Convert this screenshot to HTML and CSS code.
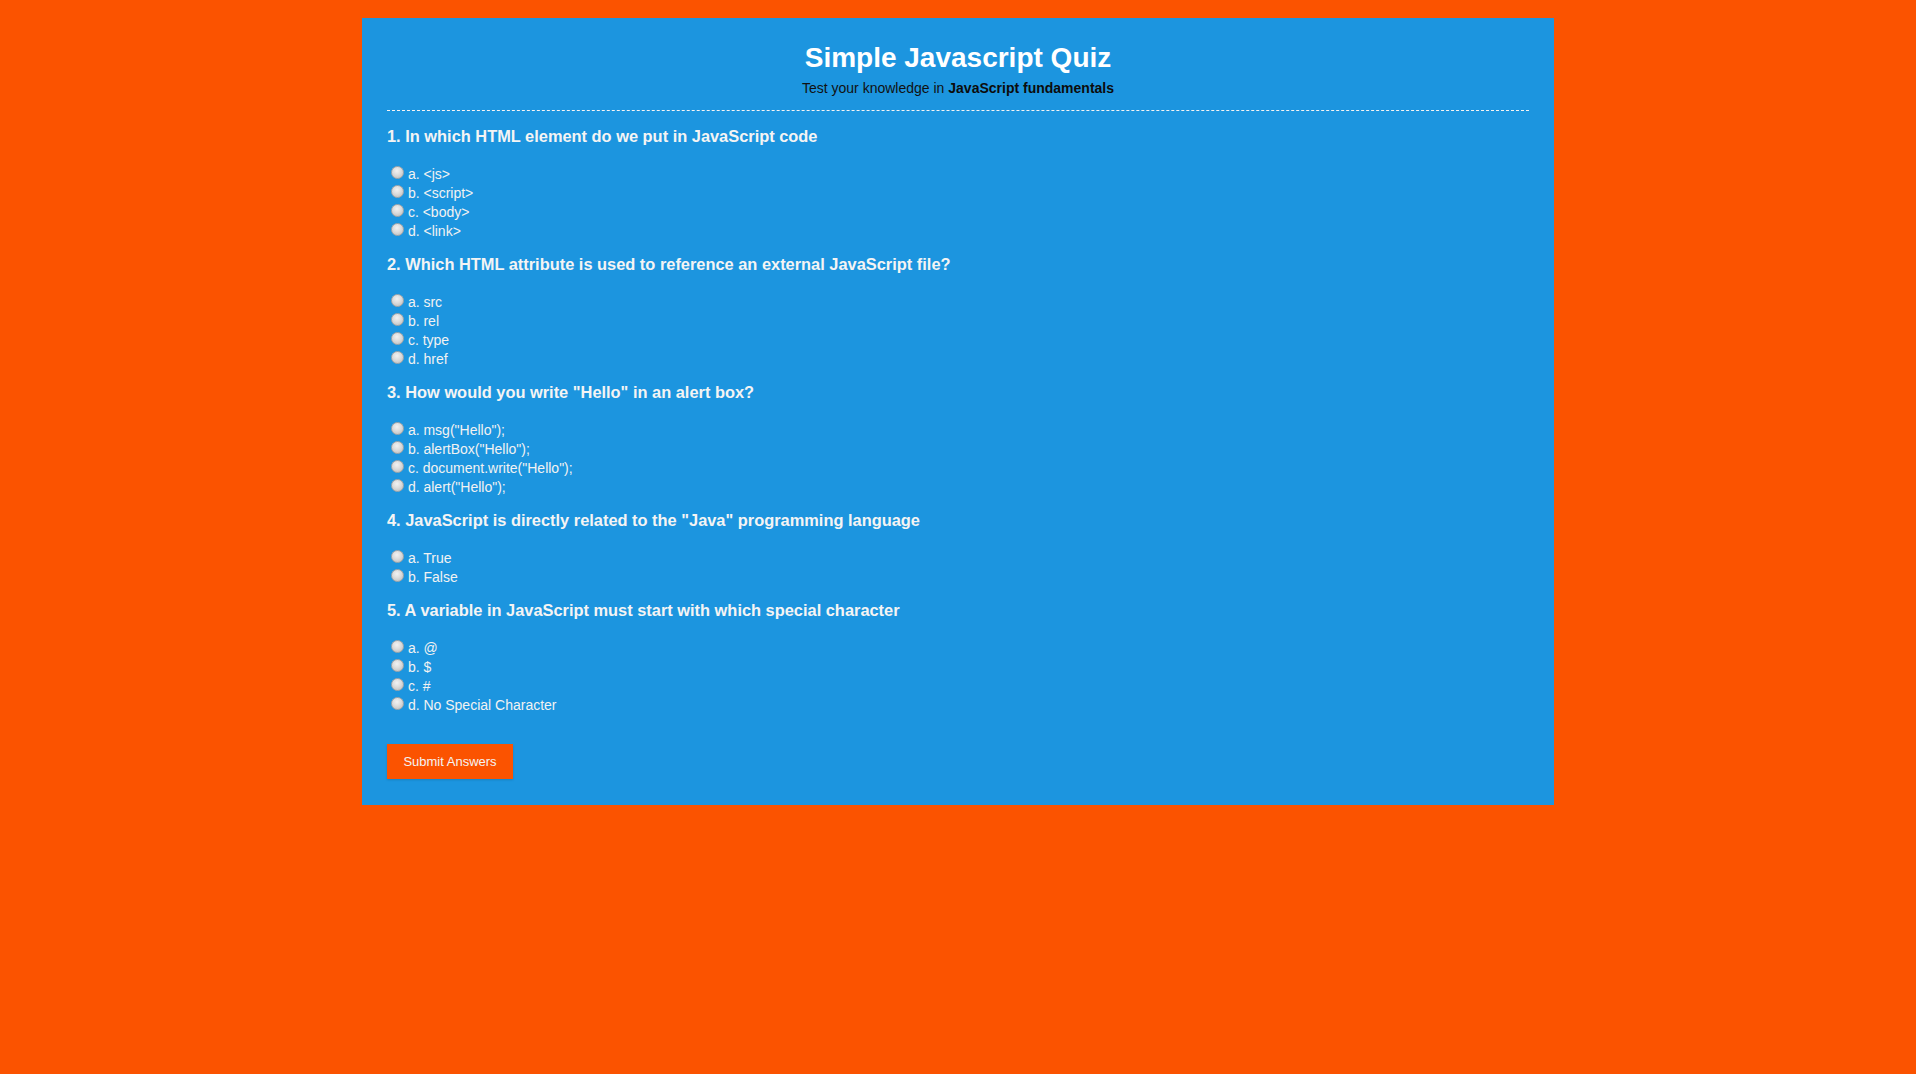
FILE: index.html
```html
<!DOCTYPE html>
<html lang="en">
<head>
<meta charset="utf-8">
<title>Simple Javascript Quiz</title>
<link rel="stylesheet" href="styles.css">
</head>
<body>
<div class="quiz">
  <header class="quiz-header">
    <h1 class="title">Simple Javascript Quiz</h1>
    <p class="subtitle">Test your knowledge in <strong>JavaScript fundamentals</strong></p>
  </header>
  <form class="quiz-form">
    <h3 class="question">1. In which HTML element do we put in JavaScript code</h3>
    <div class="options">
      <label><input type="radio" name="q1" value="a"> a. &lt;js&gt;</label><br>
      <label><input type="radio" name="q1" value="b"> b. &lt;script&gt;</label><br>
      <label><input type="radio" name="q1" value="c"> c. &lt;body&gt;</label><br>
      <label><input type="radio" name="q1" value="d"> d. &lt;link&gt;</label>
    </div>
    <h3 class="question">2. Which HTML attribute is used to reference an external JavaScript file?</h3>
    <div class="options">
      <label><input type="radio" name="q2" value="a"> a. src</label><br>
      <label><input type="radio" name="q2" value="b"> b. rel</label><br>
      <label><input type="radio" name="q2" value="c"> c. type</label><br>
      <label><input type="radio" name="q2" value="d"> d. href</label>
    </div>
    <h3 class="question">3. How would you write "Hello" in an alert box?</h3>
    <div class="options">
      <label><input type="radio" name="q3" value="a"> a. msg("Hello");</label><br>
      <label><input type="radio" name="q3" value="b"> b. alertBox("Hello");</label><br>
      <label><input type="radio" name="q3" value="c"> c. document.write("Hello");</label><br>
      <label><input type="radio" name="q3" value="d"> d. alert("Hello");</label>
    </div>
    <h3 class="question">4. JavaScript is directly related to the "Java" programming language</h3>
    <div class="options">
      <label><input type="radio" name="q4" value="a"> a. True</label><br>
      <label><input type="radio" name="q4" value="b"> b. False</label>
    </div>
    <h3 class="question">5. A variable in JavaScript must start with which special character</h3>
    <div class="options">
      <label><input type="radio" name="q5" value="a"> a. @</label><br>
      <label><input type="radio" name="q5" value="b"> b. $</label><br>
      <label><input type="radio" name="q5" value="c"> c. #</label><br>
      <label><input type="radio" name="q5" value="d"> d. No Special Character</label>
    </div>
    <button type="button" class="submit">Submit Answers</button>
  </form>
</div>
</body>
</html>
```
FILE: styles.css
```css
html, body {
  margin: 0;
  padding: 0;
}
body {
  background: #fb5300;
  font-family: "Liberation Sans", Arial, sans-serif;
  padding: 18px 0 40px;
}
.quiz {
  width: 1142px;
  margin: 0 auto;
  background: #1c95df;
  padding: 24px 25px 26px;
}
.quiz-header {
  text-align: center;
  border-bottom: 1px dashed #f4f4f4;
  padding-bottom: 14px;
}
.title {
  margin: 0 0 6px;
  font-size: 28px;
  line-height: 32px;
  color: #ffffff;
  font-weight: bold;
}
.subtitle {
  margin: 0;
  font-size: 14px;
  line-height: 16px;
  color: #111;
}
.subtitle strong {
  color: #0c0c0c;
}
.quiz-form {
  padding-top: 16px;
}
.question {
  margin: 0;
  font-size: 16.4px;
  line-height: 18px;
  color: #f4f4f4;
  font-weight: bold;
}
.options {
  padding-top: 18px;
  padding-bottom: 16px;
  font-size: 14px;
  line-height: 16px;
  color: #f2f2f2;
}
.options label {
  cursor: pointer;
}
.options input[type="radio"] {
  -webkit-appearance: none;
  appearance: none;
  width: 11px;
  height: 11px;
  margin: 3px 0 0 4px;
  border-radius: 50%;
  border: 1px solid #a8a8a8;
  background: radial-gradient(circle at 45% 35%, #f2f2f2 0%, #dcdcdc 45%, #b9b9b9 100%);
  box-sizing: content-box;
  vertical-align: baseline;
}
.submit {
  display: block;
  margin-top: 15px;
  background: #fb5300;
  color: #f4f4f4;
  border: none;
  font-family: "Liberation Sans", Arial, sans-serif;
  font-size: 13px;
  line-height: 15px;
  padding: 10px 14px;
  width: 126px;
  height: 35px;
  box-sizing: border-box;
  box-shadow: 0 1px 2px rgba(0,0,0,0.15);
  cursor: pointer;
}
```
